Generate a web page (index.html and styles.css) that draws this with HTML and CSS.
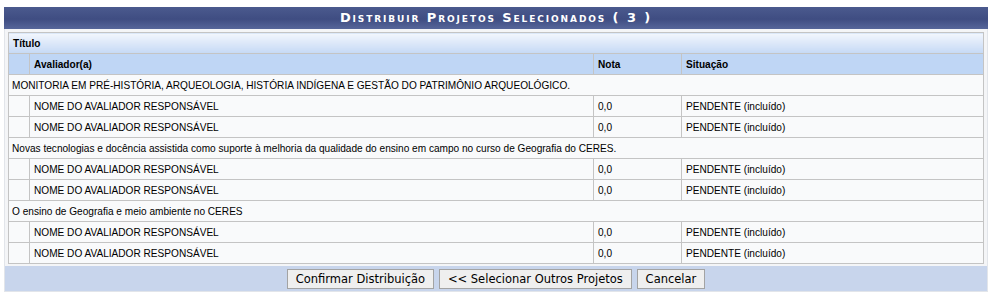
FILE: index.html
```html
<!DOCTYPE html>
<html lang="pt-BR">
<head>
  <meta charset="UTF-8" />
  <title>Distribuir Projetos Selecionados</title>
  <link rel="stylesheet" href="styles.css">
</head>
<body>

<div class="formulario">
  <div class="caption">Distribuir Projetos Selecionados ( 3 )</div>

  <div class="corpo">
    <table class="listagem">
      <colgroup>
        <col class="c-recuo">
        <col class="c-aval">
        <col class="c-nota">
        <col>
      </colgroup>
      <thead>
        <tr class="titulo-head">
          <th colspan="4">Título</th>
        </tr>
        <tr class="sub-head">
          <th></th>
          <th>Avaliador(a)</th>
          <th>Nota</th>
          <th>Situação</th>
        </tr>
      </thead>
      <tbody>
        <tr class="projeto">
          <td colspan="4">MONITORIA EM PRÉ-HISTÓRIA, ARQUEOLOGIA, HISTÓRIA INDÍGENA E GESTÃO DO PATRIMÔNIO ARQUEOLÓGICO.</td>
        </tr>
        <tr>
          <td></td>
          <td>NOME DO AVALIADOR RESPONSÁVEL</td>
          <td>0,0</td>
          <td>PENDENTE (incluído)</td>
        </tr>
        <tr>
          <td></td>
          <td>NOME DO AVALIADOR RESPONSÁVEL</td>
          <td>0,0</td>
          <td>PENDENTE (incluído)</td>
        </tr>

        <tr class="projeto">
          <td colspan="4">Novas tecnologias e docência assistida como suporte à melhoria da qualidade do ensino em campo no curso de Geografia do CERES.</td>
        </tr>
        <tr>
          <td></td>
          <td>NOME DO AVALIADOR RESPONSÁVEL</td>
          <td>0,0</td>
          <td>PENDENTE (incluído)</td>
        </tr>
        <tr>
          <td></td>
          <td>NOME DO AVALIADOR RESPONSÁVEL</td>
          <td>0,0</td>
          <td>PENDENTE (incluído)</td>
        </tr>

        <tr class="projeto">
          <td colspan="4">O ensino de Geografia e meio ambiente no CERES</td>
        </tr>
        <tr>
          <td></td>
          <td>NOME DO AVALIADOR RESPONSÁVEL</td>
          <td>0,0</td>
          <td>PENDENTE (incluído)</td>
        </tr>
        <tr>
          <td></td>
          <td>NOME DO AVALIADOR RESPONSÁVEL</td>
          <td>0,0</td>
          <td>PENDENTE (incluído)</td>
        </tr>
      </tbody>
    </table>
  </div>

  <div class="rodape">
    <button type="button">Confirmar Distribuição</button>
    <button type="button">&lt;&lt; Selecionar Outros Projetos</button>
    <button type="button">Cancelar</button>
  </div>
</div>

</body>
</html>
```

FILE: styles.css
```css
body {
  margin: 7px 4px;
  background: #fff;
  font-family: "Liberation Sans", Arial, sans-serif;
  font-size: 10.1px;
  color: #000;
}

.formulario {
  background: #f4f5f7;
  border: 1px solid #e2e5ea;
  border-top: none;
}

/* barra de título azul */
.caption {
  height: 22px;
  line-height: 22px;
  margin: 0 -1px;
  text-align: center;
  color: #fff;
  font-family: "DejaVu Sans", Verdana, sans-serif;
  font-size: 13px;
  font-weight: bold;
  font-variant: small-caps;
  letter-spacing: 1.9px;
  background: linear-gradient(#4b5a8e, #3f4d82 55%, #56669a);
}

.corpo {
  padding: 3px 3px 2px;
}

.listagem {
  width: 100%;
  table-layout: fixed;
  border-collapse: collapse;
  border: 1px solid #c4c4c4;
  background: #f9fafb;
}

.c-recuo { width: 21px; }
.c-aval { width: 564px; }
.c-nota { width: 88px; }

.listagem th,
.listagem td {
  height: 14px;
  padding: 3px 3px 3px 4px;
  border: 1px solid #c4c4c4;
  text-align: left;
  white-space: nowrap;
  overflow: hidden;
}

.listagem th {
  font-weight: bold;
}

.titulo-head th {
  background: linear-gradient(#f2f6fd, #c5d9f5);
  border-left: none;
  border-right: none;
}

.sub-head th {
  background: #bfd6f5;
}

.projeto td {
  padding-left: 3px;
}

.rodape {
  background: #c8d5ec;
  padding: 3px 0 2px;
  text-align: center;
}

.rodape button {
  height: 20px;
  margin: 0 1px;
  padding: 0 8px;
  font-family: "DejaVu Sans", Verdana, sans-serif;
  font-size: 11.5px;
  color: #000;
  background: #efefef;
  border: 1px solid #a3a3a3;
}
```
